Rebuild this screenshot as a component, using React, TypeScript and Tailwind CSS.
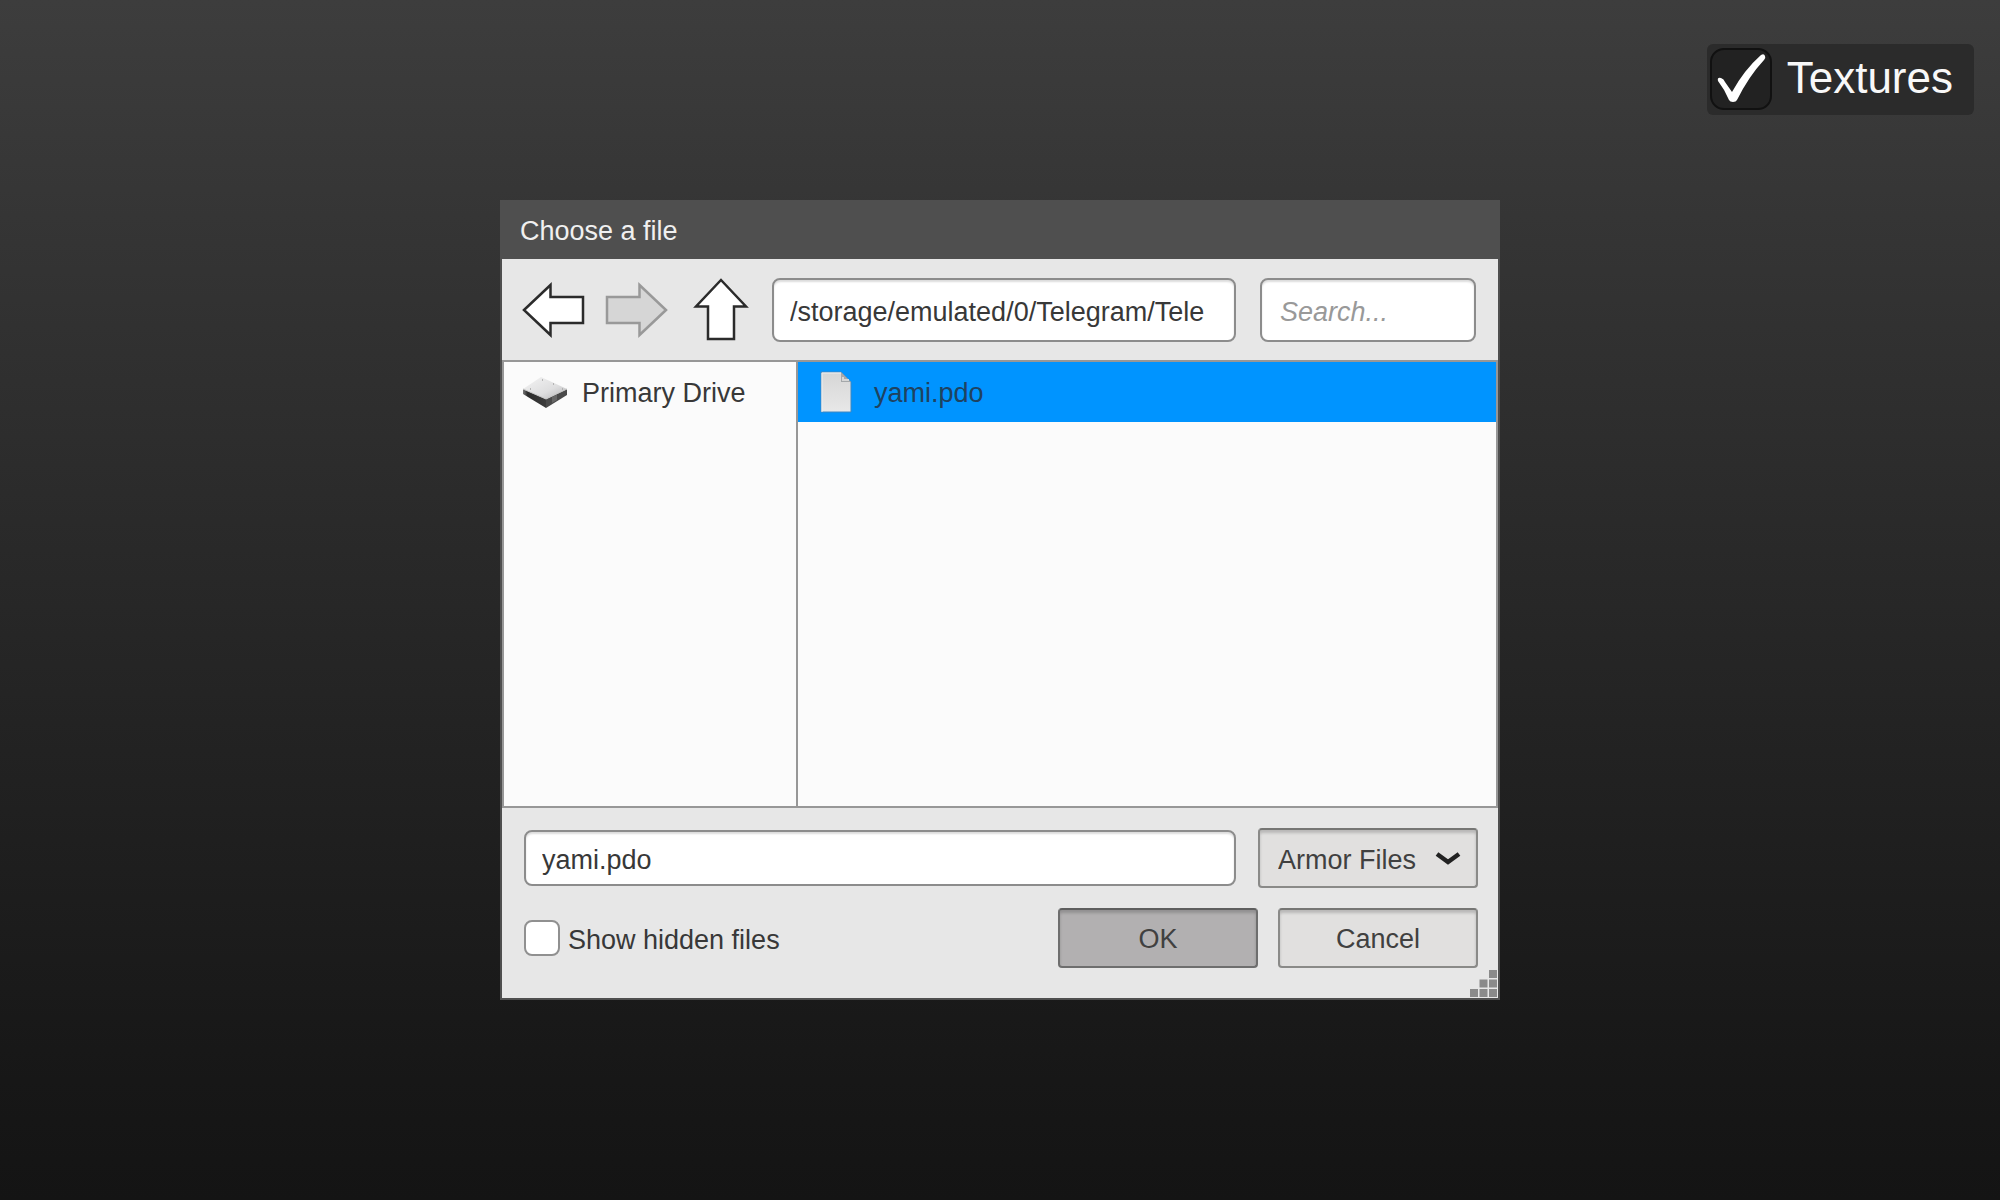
import { useState } from 'react';

const FILES = ['yami.pdo'];
const DRIVES = ['Primary Drive'];

const inputClass =
  'min-w-0 rounded-lg border-2 border-[#8c8c8c] bg-white text-[#383838] shadow-[inset_0_2px_2px_#dcdcdc] outline-none';
const buttonClass =
  'h-[60px] rounded border-2 text-[#404040] shadow-[inset_0_3px_3px_rgba(0,0,0,0.18)]';
const lightButtonClass = 'border-[#8a8a88] border-t-[#767674] bg-[#e1e0df]';

function ArrowIcon({ className }: { className?: string }) {
  return (
    <svg viewBox="0 0 64 56" className={className} strokeWidth="2.5">
      <path d="M2 28 L28.500 3 V15 H61 V41 H28.500 V53 Z" />
    </svg>
  );
}

function DriveIcon() {
  return (
    <svg width="46" height="32" viewBox="0 0 46 32">
      <defs>
        <linearGradient id="drive-top" x1="0" y1="0" x2="1" y2="1">
          <stop offset="0" stopColor="#f4f4f4" />
          <stop offset="0.6" stopColor="#dededf" />
          <stop offset="1" stopColor="#b4b4b6" />
        </linearGradient>
        <linearGradient id="drive-side" x1="0" y1="0" x2="1" y2="0">
          <stop offset="0" stopColor="#777" />
          <stop offset="0.2" stopColor="#2c2c2c" />
          <stop offset="1" stopColor="#3c3c3c" />
        </linearGradient>
      </defs>
      <path d="M1 13 L24 23 V32 L1 18 Z" fill="url(#drive-side)" />
      <path d="M24 23 L45 13 V19 L24 32 Z" fill="#4a4a4a" />
      <path d="M30 21 L35 18.500 V24 L30 27 Z" fill="#666" />
      <path d="M1 13 L19 1 L45 13 L24 23 Z" fill="url(#drive-top)" />
      <path d="M1 13 L24 23 L45 13" fill="none" stroke="#c4c4c4" />
      <path d="M20 4h1M31 8h1M40 13h1M8 13h1" stroke="#a5a5a5" strokeWidth="1.500" />
    </svg>
  );
}

function FileIcon() {
  return (
    <svg width="32" height="42" viewBox="0 0 32 42">
      <defs>
        <linearGradient id="file-page" x1="0" y1="0" x2="0" y2="1">
          <stop offset="0" stopColor="#d6d6d6" />
          <stop offset="1" stopColor="#e8e8e8" />
        </linearGradient>
      </defs>
      <path d="M1 1 H21 L31 11 V41 H1 Z" fill="url(#file-page)" stroke="#3f86c0" />
      <path d="M2 41 V2 H21" fill="none" stroke="#efefef" />
      <path d="M21 1 V11 H31 Z" fill="#a4a8ab" />
      <path d="M23 6 V9 H29" fill="none" stroke="#d6d6d6" strokeWidth="2" />
    </svg>
  );
}

function ResizeGrip() {
  return (
    <svg width="27" height="27" viewBox="0 0 27 27" className="absolute right-[3px] bottom-[3px]" fill="#8a8a8a">
      <path d="M19 0h8v8h-8zM9.500 9.500h8v8h-8zM19 9.500h8v8h-8zM0 19h8v8h-8zM9.500 19h8v8h-8zM19 19h8v8h-8z" />
    </svg>
  );
}

export default function App() {
  const [textures, setTextures] = useState(true);
  const [showHidden, setShowHidden] = useState(false);
  const [path, setPath] = useState('/storage/emulated/0/Telegram/Tele');
  const [query, setQuery] = useState('');
  const [selected, setSelected] = useState('yami.pdo');

  return (
    <div className="relative flex min-h-screen items-center justify-center bg-linear-to-b from-[#3d3d3d] via-[#171717] via-90% to-[#141414] font-['Liberation_Sans',Arial,sans-serif] text-[27px] leading-8 text-[#383838]">
      <label className="absolute top-11 right-[26px] flex items-center gap-[15px] rounded-md bg-[#2b2b2b] pt-1 pr-[21px] pb-[5px] pl-[3px] text-[44px] leading-[60px] text-[#f8f8f8]">
        <span className="relative h-[62px] w-[62px]">
          <input
            type="checkbox"
            checked={textures}
            onChange={(e) => setTextures(e.target.checked)}
            className="block h-full w-full appearance-none rounded-[14px] border-2 border-[#111] bg-[#222]"
          />
          {textures && (
            <svg viewBox="0 0 62 62" className="pointer-events-none absolute inset-0" fill="#fff">
              <path d="M8 33 Q7 29 11 30 Q14 31 15 34 L22 44 Q34 22 51 7 Q54 5 55 8 Q56 10 54 12 Q39 28 27 52 Q26 54 23 54 Q20 54 19 52 Q15 42 8 33 Z" />
            </svg>
          )}
        </span>
        <span className="pb-0.5">Textures</span>
      </label>

      <div role="dialog" aria-labelledby="dialog-title" className="relative flex h-[800px] w-1/2 flex-col bg-[#4f4f4f]">
        <h1 id="dialog-title" className="px-5 pt-[15px] pb-3 text-[#f0f0f0]">
          Choose a file
        </h1>

        <div className="mx-0.5 mb-0.5 flex flex-1 flex-col bg-[#e7e7e7]">
          {/* Navigation */}
          <div className="flex h-[101px] items-center pr-[22px] pl-5">
            <button aria-label="Back">
              <ArrowIcon className="h-14 w-16 fill-white stroke-[#2b2b2b]" />
            </button>
            <button aria-label="Forward" disabled className="ml-[18px]">
              <ArrowIcon className="h-14 w-16 rotate-180 fill-[#d6d6d6] stroke-[#999]" />
            </button>
            <button aria-label="Up" className="ml-[21px]">
              <ArrowIcon className="h-14 w-16 rotate-90 fill-white stroke-[#2b2b2b]" />
            </button>
            <input
              aria-label="Path"
              value={path}
              onChange={(e) => setPath(e.target.value)}
              className={`${inputClass} ml-[19px] h-16 flex-1 px-4 pt-1.5`}
            />
            <input
              aria-label="Search"
              placeholder="Search..."
              value={query}
              onChange={(e) => setQuery(e.target.value)}
              className={`${inputClass} ml-6 h-16 w-[216px] px-[18px] pt-1.5 placeholder:text-[#999] placeholder:italic`}
            />
          </div>

          {/* Drives and files */}
          <div className="flex flex-1 border-2 border-[#979797] bg-[#fbfbfb]">
            <ul className="w-[294px] border-r-2 border-[#979797]">
              {DRIVES.map((drive) => (
                <li key={drive}>
                  <button className="flex h-[60px] w-full items-center gap-[14px] pl-[18px] text-left">
                    <DriveIcon />
                    <span className="pt-0.5">{drive}</span>
                  </button>
                </li>
              ))}
            </ul>
            <ul className="flex-1">
              {FILES.map((file) => (
                <li key={file}>
                  <button
                    onClick={() => setSelected(file)}
                    className={`flex h-[60px] w-full items-center gap-[22px] pl-[22px] text-left ${
                      file === selected ? 'bg-[#0094ff] text-[#1f4260]' : ''
                    }`}
                  >
                    <FileIcon />
                    <span className="pt-0.5">{file}</span>
                  </button>
                </li>
              ))}
            </ul>
          </div>

          {/* File name, filter and actions */}
          <div className="flex flex-col gap-5 pt-5 pr-5 pb-[30px] pl-[22px]">
            <div className="flex items-center gap-[22px]">
              <input
                aria-label="File name"
                value={selected}
                onChange={(e) => setSelected(e.target.value)}
                className={`${inputClass} h-14 flex-1 px-4 pt-1`}
              />
              <div className="relative w-[220px]">
                <select
                  aria-label="File type"
                  className={`${buttonClass} ${lightButtonClass} block w-full appearance-none pt-1 pl-[18px]`}
                >
                  <option>Armor Files</option>
                </select>
                <svg viewBox="0 0 28 16" className="pointer-events-none absolute top-6 right-4 h-4 w-7" fill="none" stroke="#222" strokeWidth="4.500">
                  <path d="M3 2 L14 10 L25 2" />
                </svg>
              </div>
            </div>
            <div className="flex items-center gap-5">
              <label className="mr-auto flex items-center gap-2">
                <input
                  type="checkbox"
                  checked={showHidden}
                  onChange={(e) => setShowHidden(e.target.checked)}
                  className="h-9 w-9 appearance-none rounded-lg border-2 border-[#909090] bg-white checked:bg-[#0094ff]"
                />
                <span className="pt-1">Show hidden files</span>
              </label>
              <button className={`${buttonClass} w-[200px] border-[#6e6e6e] border-t-[#5e5e5e] bg-[#b2b0b1] pt-0.5`}>
                OK
              </button>
              <button className={`${buttonClass} ${lightButtonClass} w-[200px] pt-0.5`}>Cancel</button>
            </div>
          </div>
        </div>
        <ResizeGrip />
      </div>
    </div>
  );
}
